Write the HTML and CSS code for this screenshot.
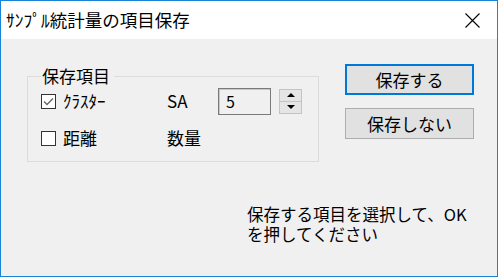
FILE: index.html
```html
<!DOCTYPE html>
<html lang="ja">
<head>
  <meta charset="UTF-8">
  <title>ｻﾝﾌﾟﾙ統計量の項目保存</title>
  <link rel="stylesheet" href="styles.css">
</head>
<body>
  <div class="window">
    <div class="titlebar">
      <span class="title">ｻﾝﾌﾟﾙ統計量の項目保存</span>
      <svg class="close" width="15" height="15" viewBox="0 0 15 15">
        <path d="M0.5 0.5 L14.5 14.5 M14.5 0.5 L0.5 14.5" stroke="#000" stroke-width="1.1" fill="none"/>
      </svg>
    </div>
    <div class="content">
      <div class="top-row">
        <fieldset class="group">
          <legend>保存項目</legend>
          <div class="grid">
            <label class="check">
              <svg class="box" width="15" height="15" viewBox="0 0 15 15">
                <rect x="0.5" y="0.5" width="14" height="14" fill="#fff" stroke="#333"/>
                <path d="M3 7.5 L6 10.5 L12 4.5" stroke="#666" stroke-width="1.3" fill="none"/>
              </svg>
              <span>ｸﾗｽﾀｰ</span>
            </label>
            <span class="name">SA</span>
            <div class="spin">
              <div class="spin-input">5</div>
              <div class="spin-btns">
                <span class="spin-up"></span>
                <span class="spin-down"></span>
              </div>
            </div>
            <label class="check">
              <svg class="box" width="15" height="15" viewBox="0 0 15 15">
                <rect x="0.5" y="0.5" width="14" height="14" fill="#fff" stroke="#333"/>
              </svg>
              <span>距離</span>
            </label>
            <span class="name">数量</span>
            <span></span>
          </div>
        </fieldset>
        <div class="buttons">
          <button class="btn btn-default">保存する</button>
          <button class="btn">保存しない</button>
        </div>
      </div>
      <p class="message">保存する項目を選択して、OK<br>を押してください</p>
    </div>
  </div>
</body>
</html>
```

FILE: styles.css
```css
* {
  box-sizing: border-box;
}
body {
  margin: 0;
  font-family: "Noto Sans CJK JP", "Liberation Sans", sans-serif;
  font-size: 17px;
  color: #000;
}
.window {
  width: 498px;
  height: 277px;
  border: 1px solid #1883d7;
  background-color: #f0f0f0;
  display: flex;
  flex-direction: column;
}
.titlebar {
  height: 38px;
  background-color: #fff;
  display: flex;
  align-items: center;
  justify-content: space-between;
  padding: 0 17px 0 5px;
}
.title {
  font-size: 17.5px;
  line-height: 20px;
}
.close {
  display: block;
}
.content {
  flex: 1;
}
.top-row {
  display: flex;
  align-items: flex-start;
}
.group {
  margin: 27px 0 0 26px;
  width: 292px;
  height: 96px;
  border: 1px solid #dcdcdc;
  padding: 1px 0 0 13px;
}
.group legend {
  padding: 0 4px 0 1px;
  margin-left: 0;
  line-height: 20px;
  font-size: 17px;
}
.grid {
  display: grid;
  grid-template-columns: 126px 51px auto;
  grid-template-rows: 28px 28px;
  row-gap: 9px;
  align-items: center;
}
.check {
  display: flex;
  align-items: center;
  gap: 7px;
  line-height: 20px;
}
.box {
  display: block;
}
.name {
  line-height: 20px;
}
.spin {
  display: flex;
  align-items: center;
  gap: 8px;
}
.spin-input {
  width: 53px;
  height: 27px;
  border: 1px solid #7a7a7a;
  box-shadow: inset 1px 1px 0 #c8c8c8;
  background-color: #f0f0f0;
  padding: 0 0 0 7px;
  line-height: 24px;
  font-size: 16px;
}
.spin-btns {
  width: 23px;
  height: 25px;
  display: flex;
  flex-direction: column;
  border: 1px solid #c4c4c4;
  background-color: #e5e5e5;
}
.spin-up,
.spin-down {
  flex: 1;
  display: flex;
  align-items: center;
  justify-content: center;
}
.spin-up {
  border-bottom: 1px solid #c4c4c4;
}
.spin-up::before {
  content: "";
  border-left: 4px solid transparent;
  border-right: 4px solid transparent;
  border-bottom: 4px solid #000;
}
.spin-down::before {
  content: "";
  border-left: 4px solid transparent;
  border-right: 4px solid transparent;
  border-top: 4px solid #000;
}
.buttons {
  margin: 25px 0 0 26px;
  display: flex;
  flex-direction: column;
  gap: 13px;
}
.btn {
  width: 129px;
  height: 31px;
  font-family: inherit;
  font-size: 17px;
  line-height: 20px;
  color: #000;
  background-color: #e1e1e1;
  border: 1px solid #adadad;
  padding: 0;
}
.btn-default {
  border: 2px solid #0078d7;
}
.message {
  margin: 42px 0 0 246px;
  line-height: 20px;
  font-size: 16.5px;
}
```
